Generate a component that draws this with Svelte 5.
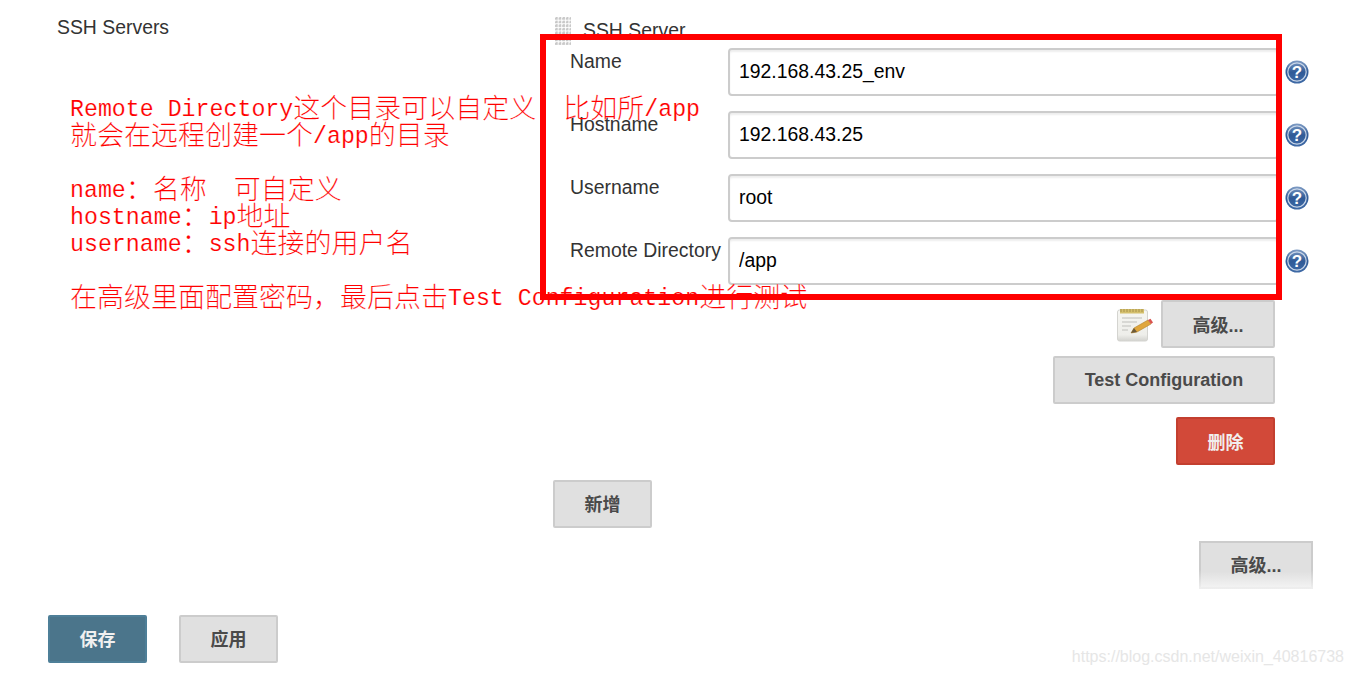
<script lang="ts">
  const fields = [
    { label: "Name", value: "192.168.43.25_env" },
    { label: "Hostname", value: "192.168.43.25" },
    { label: "Username", value: "root" },
    { label: "Remote Directory", value: "/app" }
  ];
</script>

{#snippet help()}
  <svg class="help" viewBox="0 0 24 24" width="24" height="24" aria-hidden="true">
    <defs>
      <linearGradient id="helpfill" x1="0" y1="0" x2="0" y2="1">
        <stop offset="0" stop-color="#7f9cc4" />
        <stop offset="0.5" stop-color="#2f5a97" />
        <stop offset="1" stop-color="#3f6aa6" />
      </linearGradient>
    </defs>
    <circle cx="12" cy="12" r="11.5" fill="url(#helpfill)" />
    <circle cx="12" cy="12" r="9.2" fill="none" stroke="#c9d6e8" stroke-width="1.2" />
    <text x="12" y="18" text-anchor="middle" class="qmark">?</text>
  </svg>
{/snippet}

<div class="page">
  <section class="servers">
    <div class="side">SSH Servers</div>
    <div class="main">
      <div class="head">
        <span class="grip"></span>
        <span class="title">SSH Server</span>
      </div>
      <div class="fields">
        {#each fields as f}
          <div class="field">
            <span class="label">{f.label}</span>
            <input type="text" value={f.value} />
            {@render help()}
          </div>
        {/each}
      </div>
      <div class="actions">
        <div class="adv-row">
          <svg class="note" viewBox="0 0 36 36" width="36" height="36" aria-hidden="true">
            <defs>
              <linearGradient id="paper" x1="0" y1="0" x2="0" y2="1">
                <stop offset="0" stop-color="#f6f6f2" />
                <stop offset="0.8" stop-color="#eeeeea" />
                <stop offset="1" stop-color="#d2d2ce" />
              </linearGradient>
            </defs>
            <rect x="0.5" y="4" width="30" height="31" rx="2" fill="url(#paper)" stroke="#d4d4d0" />
            <rect x="3" y="3" width="24" height="4.5" fill="#d4bf6c" />
            <path d="M4 3v3M7 3v3M10 3v3M13 3v3M16 3v3M19 3v3M22 3v3M25 3v3" stroke="#a8924a" stroke-width="1" />
            <path d="M5 12h20M5 16h15M5 20h9M5 24h6" stroke="#d0d0cc" stroke-width="1.3" />
            <path d="M14 27l3-5 14-8 3 4-14 8z" fill="#e0a63c" stroke="#b0822c" stroke-width="0.6" />
            <path d="M31 14l3 4 2-1.5-2.5-3.8z" fill="#d9534f" />
            <path d="M14 27l3-5 3 4z" fill="#6b5a3a" />
          </svg>
          <button class="btn">高级...</button>
        </div>
        <button class="btn wide">Test Configuration</button>
        <button class="btn danger">删除</button>
      </div>
      <button class="btn add">新增</button>
    </div>
  </section>

  <div class="more">
    <button class="btn fade">高级...</button>
  </div>

  <div class="bottom">
    <button class="btn primary">保存</button>
    <button class="btn">应用</button>
  </div>

  <pre class="note-text"><span class="l">Remote Directory</span>这个目录可以自定义　比如所<span class="l">/app</span>
就会在远程创建一个<span class="l">/app</span>的目录

<span class="l">name</span>：名称　可自定义
<span class="l">hostname</span>：<span class="l">ip</span>地址
<span class="l">username</span>：<span class="l">ssh</span>连接的用户名

在高级里面配置密码，最后点击<span class="l">Test Configuration</span>进行测试</pre>
  <div class="callout"></div>
  <div class="watermark">https://blog.csdn.net/weixin_40816738</div>
</div>

<style>
  :global(body) {
    margin: 0;
    background: #fff;
  }

  .page {
    position: relative;
    height: 675px;
    overflow: hidden;
    font-family: "Liberation Sans", "Noto Sans CJK SC", sans-serif;
    font-size: 19.4px;
    color: #333;
  }

  .servers {
    display: flex;
    padding-top: 14px;
  }

  .side {
    width: 496px;
    padding-left: 57px;
    line-height: 26px;
  }

  .main {
    width: 760px;
  }

  .head {
    display: flex;
    gap: 12px;
    height: 34px;
  }

  .grip {
    width: 16px;
    height: 28px;
    margin: 3px 0 0 2px;
    background-image: radial-gradient(circle at 1.5px 1.5px, #c8c8c8 1.3px, transparent 1.6px);
    background-size: 3.6px 3.6px;
  }

  .title {
    line-height: 32px;
  }

  .field {
    display: flex;
    height: 47px;
    margin-bottom: 16px;
  }

  .label {
    width: 158px;
    padding-left: 17px;
    line-height: 26px;
    white-space: nowrap;
  }

  input {
    box-sizing: border-box;
    width: 551px;
    height: 48px;
    margin: 0;
    padding: 0 9px 2px;
    border: 2px solid #ccc;
    border-radius: 4px;
    box-shadow: inset 0 2px 2px #eee;
    font: inherit;
    color: #000;
    outline: none;
  }

  .help {
    margin: 12px 0 0 6px;
  }

  .qmark {
    font-family: "Liberation Sans", sans-serif;
    font-size: 17px;
    font-weight: 700;
    fill: #fff;
  }

  .actions {
    display: flex;
    flex-direction: column;
    align-items: flex-end;
    gap: 8px;
    width: 722px;
  }

  .adv-row {
    display: flex;
    align-items: center;
    gap: 8px;
  }

  .btn {
    box-sizing: border-box;
    width: 114px;
    height: 48px;
    padding: 0;
    border: 2px solid #ccc;
    border-radius: 2px;
    background: #e0e0e0;
    color: #4a4a4a;
    font: 700 18px "Liberation Sans", "Noto Sans CJK SC", sans-serif;
  }

  .wide {
    width: 222px;
  }

  .danger {
    width: 99px;
    margin-top: 5px;
    background: #d24939;
    border-color: #c33f2f;
    color: #f1eeee;
  }

  .add {
    display: block;
    width: 99px;
    margin-top: 15px;
    padding-bottom: 2px;
  }

  .more {
    display: flex;
    justify-content: flex-end;
    padding: 13px 40px 0 0;
  }

  .fade {
    padding-bottom: 2px;
    background: linear-gradient(#e0e0e0 65%, #f2f2f2);
    border-image: linear-gradient(#ccc 60%, #eee) 1;
  }

  .bottom {
    display: flex;
    gap: 32px;
    padding: 26px 0 0 48px;
  }

  .bottom .btn {
    width: 99px;
    padding-bottom: 2px;
  }

  .bottom .primary {
    background: #4b758b;
    border-color: #4e7f98;
    color: #f0f0f0;
  }

  .callout {
    position: absolute;
    left: 540px;
    top: 34px;
    width: 742px;
    height: 266px;
    box-sizing: border-box;
    border: 6px solid #f00;
  }

  .note-text {
    position: absolute;
    left: 70px;
    top: 93px;
    margin: 0;
    font-family: "Noto Sans CJK SC", sans-serif;
    font-size: 27px;
    font-weight: 300;
    line-height: 27px;
    color: #f00;
    -webkit-text-stroke: 0.15px #fff;
  }

  .l {
    font-family: "Liberation Mono", monospace;
    font-size: 23.25px;
    font-weight: 400;
    line-height: 0;
    vertical-align: 2px;
  }

  .watermark {
    position: absolute;
    right: 9px;
    top: 647px;
    color: #e6e6e6;
    font-size: 16px;
    line-height: 20px;
  }
</style>
